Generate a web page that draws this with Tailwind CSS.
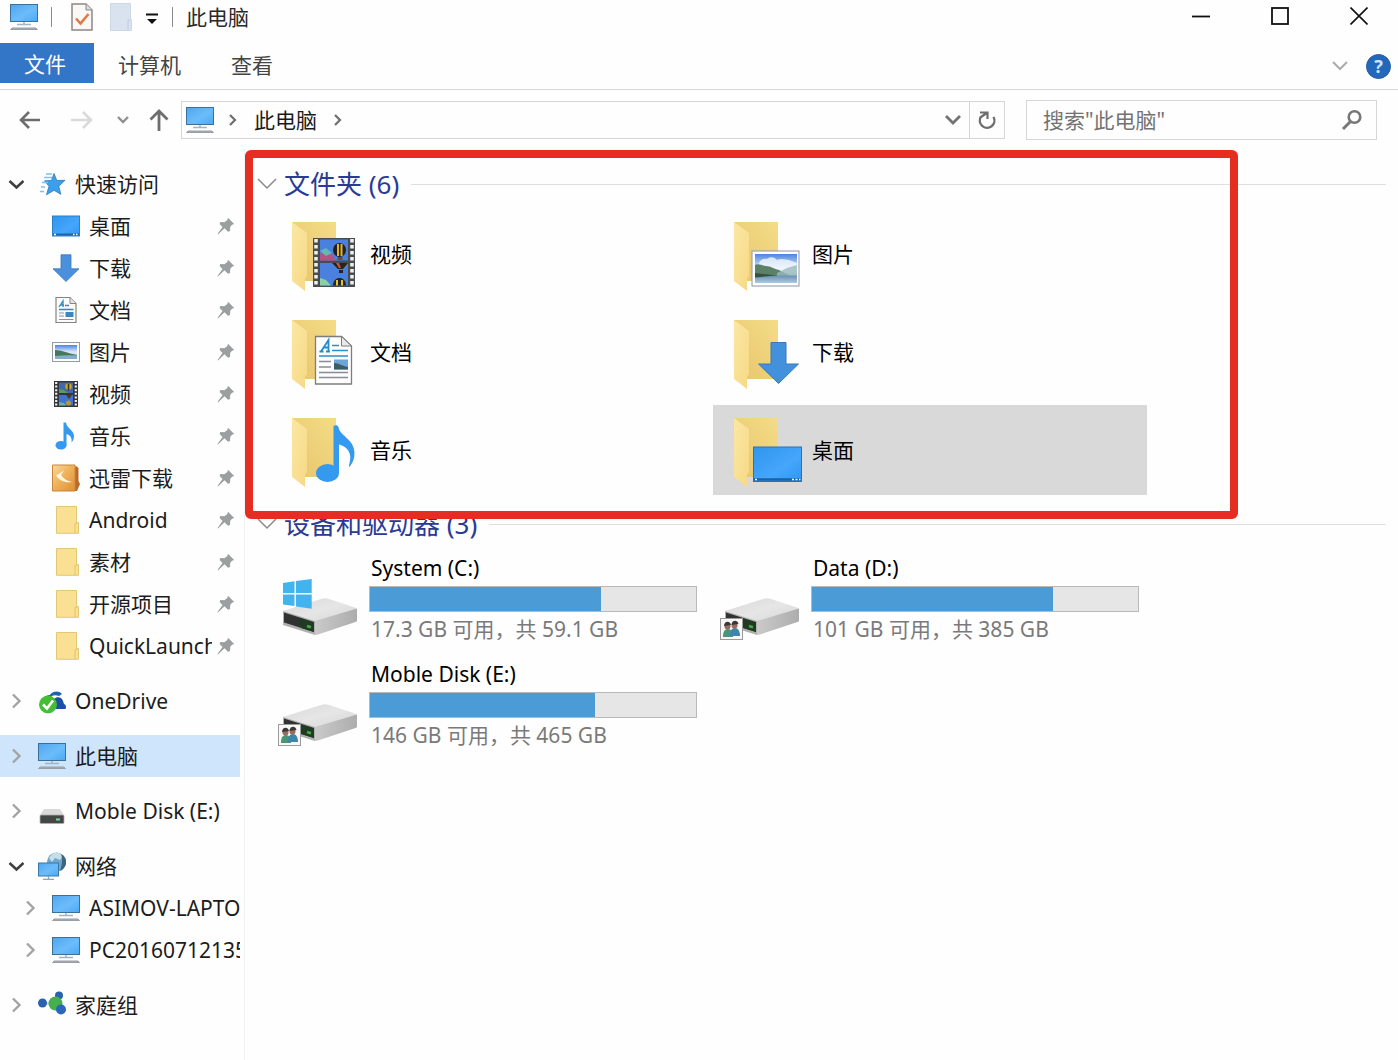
<!DOCTYPE html>
<html lang="zh-CN">
<head>
	<meta charset="UTF-8">
	<meta name="viewport" content="width=device-width, initial-scale=1.0">
	<title>此电脑</title>
	<script src="https://cdn.jsdelivr.net/npm/@tailwindcss/browser@4"></script>
</head>
<body class="min-h-screen flex flex-col overflow-x-hidden bg-[#fefefe] font-['Noto_Sans','Noto_Sans_CJK_SC',sans-serif] text-[21px] leading-[28px] text-[#1a1a1a]">

	<!-- shared icons -->
	<svg class="absolute w-0 h-0" aria-hidden="true">
		<defs>
			<linearGradient id="screen" x1="0" y1="0" x2="1" y2="1">
				<stop offset="0" stop-color="#4fa6ee"/>
				<stop offset=".55" stop-color="#6cbcfa"/>
				<stop offset="1" stop-color="#4ba9f5"/>
			</linearGradient>
			<linearGradient id="desk" x1="0" y1="0" x2="1" y2="1">
				<stop offset="0" stop-color="#2f95ee"/>
				<stop offset=".6" stop-color="#45a6fb"/>
				<stop offset="1" stop-color="#2e96f2"/>
			</linearGradient>
			<linearGradient id="flap" x1="0" y1="0" x2="1" y2="1">
				<stop offset="0" stop-color="#fbe7a4"/>
				<stop offset="1" stop-color="#f6d985"/>
			</linearGradient>
			<linearGradient id="inner" x1="1" y1="0" x2="0" y2="1">
				<stop offset="0" stop-color="#f4dc87"/>
				<stop offset="1" stop-color="#e7c56c"/>
			</linearGradient>
			<linearGradient id="sky" x1="0" y1="0" x2="0" y2="1">
				<stop offset="0" stop-color="#4f83e0"/>
				<stop offset=".5" stop-color="#d9ebf8"/>
				<stop offset="1" stop-color="#9cc3e4"/>
			</linearGradient>
			<linearGradient id="lake" x1="0" y1="0" x2="0" y2="1">
				<stop offset="0" stop-color="#6c8fae"/>
				<stop offset="1" stop-color="#a9cbe8"/>
			</linearGradient>
			<linearGradient id="metal" x1="0" y1="0" x2="1" y2="1">
				<stop offset="0" stop-color="#d8d8d8"/>
				<stop offset=".5" stop-color="#e6e6e6"/>
				<stop offset="1" stop-color="#d6d6d6"/>
			</linearGradient>
			<linearGradient id="side" x1="0" y1="0" x2="1" y2="0">
				<stop offset="0" stop-color="#cacaca"/>
				<stop offset="1" stop-color="#adadad"/>
			</linearGradient>
			<linearGradient id="amber" x1="0" y1="0" x2="1" y2="1">
				<stop offset="0" stop-color="#f8d9a0"/>
				<stop offset=".5" stop-color="#eeb057"/>
				<stop offset="1" stop-color="#e08f33"/>
			</linearGradient>

			<symbol id="pc" viewBox="0 0 28 28">
				<rect x=".5" y="1.5" width="27" height="17" fill="url(#screen)" stroke="#3b7099"/>
				<path d="M14 19v2M7 21.500h14" stroke="#9fb6c6" stroke-width="1.500"/>
				<path d="M2 25l-1.500 1.500h27L26 25z" fill="#a9adb3" stroke="#9a9ea5"/>
			</symbol>
			<symbol id="star" viewBox="0 0 28 28">
				<path d="M16 3.500l2.800 7 8.200-.2-6.200 6 2 8-6.800-4-7.500 4.500 2.500-8.500-4.500-5.500 7-.3z" fill="#3aa0ee" stroke="#2a78b8" stroke-width=".8"/>
				<path d="M8 4h6M6 7.500h8M10 12.500H4M7 17H3M6 21.500H2" stroke="#7fc0f2" stroke-width="1.400"/>
			</symbol>
			<symbol id="desktop" viewBox="0 0 28 28">
				<rect x=".5" y="4" width="27" height="20" fill="url(#desk)" stroke="#2b80c4"/>
				<path d="M1 22.500h26" stroke="#1c66ad" stroke-width="2"/>
				<path d="M2 22.500h2M21 22.500h1.500M24 22.500h1.500" stroke="#fff" stroke-width="1.300"/>
			</symbol>
			<symbol id="down" viewBox="0 0 28 28">
				<path d="M9 .8h10v14h8L14 27.500 1 14.800h8z" fill="#4a90dc" stroke="#3b78b8" stroke-width=".8"/>
			</symbol>
			<symbol id="doc" viewBox="0 0 28 28">
				<path d="M4 1.500h14l6 6v19H4z" fill="#fbfbfb" stroke="#848484" stroke-width="1.200"/>
				<path d="M18 1.500v6h6" fill="#e6e6e6" stroke="#848484"/>
				<path d="M7 11l4-6v6M8.500 9H12" fill="none" stroke="#2d8cc8" stroke-width="1.300"/>
				<path d="M13 9.500h4M7 13.500h14.500" stroke="#2d8cc8" stroke-width="1.500"/>
				<path d="M7 17h5M7 20h5M7 23.500h14.500" stroke="#8f8f9b" stroke-width="1.200"/>
				<rect x="13.500" y="16" width="8" height="5" fill="#3b88c0"/>
			</symbol>
			<symbol id="picture" viewBox="0 0 28 28">
				<rect x=".5" y="4.500" width="27" height="19" fill="#fff" stroke="#969ca3"/>
				<rect x="3" y="7" width="22" height="14" fill="url(#sky)"/>
				<path d="M3 12c6 0 12 3 22 5v4H3z" fill="#47785b"/>
				<path d="M3 18c8-1 15-1 22-.5V21H3z" fill="#86aec9"/>
			</symbol>
			<symbol id="film" viewBox="0 0 28 28">
				<rect x="2" y="1" width="24" height="26" fill="#33373b"/>
				<path d="M4.200 2v24M23.800 2v24" stroke="#f1f1f1" stroke-width="2.200" stroke-dasharray="2 1.600"/>
				<path d="M7 2.500h14v10.500H7z" fill="#4468ad"/>
				<path d="M7 15h14v10.500H7z" fill="#3f73cf"/>
				<circle cx="16.500" cy="6.500" r="3.200" fill="#c8a52b"/>
				<path d="M16.500 3.500v7" stroke="#3b3320" stroke-width="1.500"/>
				<path d="M7 9l5 1 4 3H7z" fill="#5b9b57"/>
				<path d="M14 15h6l-3 4z" fill="#49392b"/>
				<circle cx="16.500" cy="23" r="2.500" fill="#b79a2f"/>
				<path d="M7 22l5 1 2 2.500H7z" fill="#6bb3a4"/>
			</symbol>
			<symbol id="note" viewBox="0 0 28 28">
				<ellipse cx="9" cy="23.300" rx="5.500" ry="4.300" fill="#339af0"/>
				<path d="M11.500 23.500V.5h2.500c.5 6 8 7.500 8 13.500 0 3-1 5-2.500 6.500.8-5-1.500-7.500-5-8.500v11.500z" fill="#339af0"/>
			</symbol>
			<symbol id="thunder" viewBox="0 0 28 28">
				<path d="M24 2l2.500 2v13l1.500 3-3 7H4l-3-1z" fill="#b86a28"/>
				<path d="M.5 1h22.500v26H.5z" fill="url(#amber)" stroke="#c98539"/>
				<path d="M4 11.500l8-5-3 4.500c3 4 6 6 11 7-7 1-12-1-16-6.500z" fill="#fff6e0"/>
			</symbol>
			<symbol id="folder" viewBox="0 0 28 28">
				<path d="M4.500.5h20v16h2v10.800h-22z" fill="#fae092" stroke="#e2c873"/>
				<path d="M23 27V17.500h1.500v-1" fill="none" stroke="#dfc36c"/>
			</symbol>
			<symbol id="onedrive" viewBox="0 0 28 28">
				<path d="M6 12c1-3 3-4 6-4 2-4 9-5 12-1l-3 2c-5-2-9 0-10 4z" fill="#1d63ad"/>
				<path d="M11 22c0-4 1-6 4-7 0-5 8-7 10-1l1 3c3 1 2 5 1 5H12z" fill="#1c4fa5"/>
				<circle cx="10" cy="17.500" r="9" fill="#45bd35"/>
				<path d="M5 17.500l4 4 6-8" fill="none" stroke="#fff" stroke-width="2.600"/>
			</symbol>
			<symbol id="disk" viewBox="0 0 28 28">
				<path d="M6 12h16l4 6H2z" fill="#d9d9d9"/>
				<rect x="2" y="18" width="24" height="8.500" rx="1" fill="#444746" stroke="#aeb0b0" stroke-width=".8"/>
				<path d="M18 22.500h4" stroke="#71d6a2" stroke-width="2"/>
			</symbol>
			<symbol id="network" viewBox="0 0 28 28">
				<circle cx="18.500" cy="10" r="9.500" fill="#6fa6c9"/>
				<path d="M11 6c3-6 10-7 14-2l-3 4-5-2-3 4z" fill="#c3dfe9"/>
				<path d="M23 2c4 2 6 6 5 10-1 3-3 6-6 7 2-6 3-11 1-17z" fill="#3d6480"/>
				<rect x=".5" y="11" width="20" height="13" fill="url(#screen)" stroke="#3878a8"/>
				<path d="M10.500 24v3M5 27.300h11" stroke="#8ba6b8" stroke-width="1.300"/>
			</symbol>
			<symbol id="homegroup" viewBox="0 0 28 28">
				<path d="M5 12.500h12L21 5M17 13l6 6" stroke="#bcd7bd" stroke-width="2" fill="none"/>
				<circle cx="4.500" cy="12" r="4.500" fill="#2a62b0"/>
				<circle cx="21" cy="4.500" r="4" fill="#2a62b0"/>
				<circle cx="17.500" cy="12.500" r="7" fill="#46b050"/>
				<circle cx="23" cy="18.500" r="5" fill="#2b66bb"/>
			</symbol>
			<symbol id="pin" viewBox="0 0 18 18">
				<path d="M11 .8l6.200 6.200-2.200.8-1.800 2.200-.2 4-2 .8-3.500-3.500L1 17.500.5 17l5-7L2.600 7l.8-2 4 .2L10.300 3z" fill="#9b9fa0"/>
			</symbol>
			<symbol id="right" viewBox="0 0 16 16">
				<path d="M5 1.500L11.500 8 5 14.500" fill="none" stroke="#a3a3a3" stroke-width="2.400"/>
			</symbol>
			<symbol id="open" viewBox="0 0 16 16">
				<path d="M1.500 5L8.500 11.500 15.500 5" fill="none" stroke="#3f3f3f" stroke-width="2.600"/>
			</symbol>
			<symbol id="thin" viewBox="0 0 20 12">
				<path d="M1 1l9 9 9-9" fill="none" stroke="#8a8a8a" stroke-width="1.500"/>
			</symbol>
			<symbol id="bigfolder" viewBox="0 0 72 76">
				<path d="M2 6h44v59H14z" fill="url(#inner)"/>
				<path d="M2 6l15 11v43l-2 3v12L2 65z" fill="url(#flap)"/>
			</symbol>
			<symbol id="drive" viewBox="0 0 80 64">
				<path d="M5 35L43 23q4-1.500 8 0L77 31.500q2 .8 1 2.500L38 46z" fill="url(#metal)"/>
				<path d="M37 45l42-12.500v12q0 1-1.500 1.500L40 58.500l-3 .5z" fill="url(#side)"/>
				<path d="M5 35l32 10v14L5 49z" fill="#b0b0b0"/>
				<path d="M6 36.500l30 9.500v10L6 46.500z" fill="#303331"/>
				<path d="M21 42l15 4.500V56l-13-4z" fill="#1f3b22"/>
				<path d="M29 50l4 1.200" stroke="#49a94b" stroke-width="2.500"/>
			</symbol>
			<symbol id="users" viewBox="0 0 80 64">
				<rect x=".5" y="42.500" width="22" height="21" fill="#f8f8f8" stroke="#9b9b9b"/>
				<path d="M3 61c0-6 2-8 5-8s5 3 5 8z" fill="#4a9478"/>
				<path d="M10 60c0-6 2-8 5-8s5 3 5 8z" fill="#3f84ad"/>
				<circle cx="7.500" cy="50.500" r="3" fill="#9b6b5b"/>
				<circle cx="14.500" cy="49.500" r="3" fill="#9b6b5b"/>
				<path d="M4 50c0-5 6-6 7-1zM11.500 49c0-5 6-6 7-1z" fill="#3c3838"/>
			</symbol>
		</defs>
	</svg>

	<!-- title bar -->
	<header class="flex justify-between h-[43px] text-[#2a2a2a]">
		<div class="flex items-center h-[33px] pl-[10px]">
			<svg class="w-7 h-7"><use href="#pc"/></svg>
			<span class="w-px h-5 ml-[13px] bg-[#8c8c8c]"></span>
			<button class="ml-[19px]" aria-label="属性">
				<svg class="w-[22px] h-7" viewBox="0 0 22 28">
					<path d="M1 1h14l6 6v20H1z" fill="#f9f8f7" stroke="#8b8784" stroke-width="1.500"/>
					<path d="M15 1v6h6" fill="#ddd" stroke="#8b8784"/>
					<path d="M5 15.500l4.500 5 8-9.500" fill="none" stroke="#e07a45" stroke-width="2.600"/>
				</svg>
			</button>
			<button class="ml-[17px]" aria-label="新建文件夹">
				<svg class="w-[22px] h-7" viewBox="0 0 22 28">
					<path d="M.5.5h20v16h1v11H.5z" fill="#d9e3ef" stroke="#cdd8e6"/>
					<path d="M18 27V17h2" fill="none" stroke="#bccadb"/>
				</svg>
			</button>
			<button class="ml-[14px] pt-1" aria-label="自定义快速访问工具栏">
				<svg class="w-3 h-3" viewBox="0 0 12 12"><path d="M0 1.500h12" stroke="#111" stroke-width="2"/><path d="M1 6h10l-5 5z" fill="#111"/></svg>
			</button>
			<span class="w-px h-5 ml-[14px] bg-[#8c8c8c]"></span>
			<h1 class="ml-[13px]">此电脑</h1>
		</div>
		<div class="flex h-8">
			<button class="w-[79px] flex items-center justify-center" aria-label="最小化">
				<svg class="w-[18px] h-[18px]" viewBox="0 0 18 18"><path d="M0 9.500h18" stroke="#111" stroke-width="1.800"/></svg>
			</button>
			<button class="w-[79px] flex items-center justify-center" aria-label="最大化">
				<svg class="w-[18px] h-[18px]" viewBox="0 0 18 18"><rect x="1" y="1" width="16" height="16" fill="none" stroke="#111" stroke-width="1.800"/></svg>
			</button>
			<button class="w-[79px] flex items-center justify-center" aria-label="关闭">
				<svg class="w-[18px] h-[18px]" viewBox="0 0 18 18"><path d="M.5.5l17 17M17.500.5l-17 17" stroke="#111" stroke-width="1.600"/></svg>
			</button>
		</div>
	</header>

	<!-- ribbon tabs -->
	<div class="flex justify-between h-[47px] border-b border-[#d6d6d6]">
		<div class="flex h-[40px]">
			<button class="w-[94px] pt-0.5 pr-1 bg-[#3375c6] text-white">文件</button>
			<button class="ml-6 pt-1 text-[#444]">计算机</button>
			<button class="ml-[50px] pt-1 text-[#444]">查看</button>
		</div>
		<div class="flex items-center gap-[18px] pr-[7px]">
			<button aria-label="展开功能区"><svg class="w-4 h-[10px]" viewBox="0 0 16 10"><path d="M1 1l7 7 7-7" fill="none" stroke="#ababab" stroke-width="2"/></svg></button>
			<button class="w-[25px] h-[25px] rounded-full bg-[#2368bb] border border-[#2a5ea0] text-[#cfe4fb] text-[18px] leading-[22px] font-bold" aria-label="帮助">?</button>
		</div>
	</div>

	<!-- address bar -->
	<div class="flex items-center h-[59px] pl-[19px] pr-[21px]">
		<button aria-label="后退"><svg class="w-[22px] h-5" viewBox="0 0 22 20"><path d="M1.500 10H21M10 2l-8 8 8 8" fill="none" stroke="#6e6e6e" stroke-width="2.600"/></svg></button>
		<button class="ml-[30px]" aria-label="前进"><svg class="w-[22px] h-5" viewBox="0 0 22 20"><path d="M0 10h20.500M12 2l8 8-8 8" fill="none" stroke="#dadada" stroke-width="2.600"/></svg></button>
		<button class="ml-6" aria-label="最近浏览的位置"><svg class="w-3 h-2" viewBox="0 0 12 8"><path d="M1 1l5 5 5-5" fill="none" stroke="#909090" stroke-width="2.400"/></svg></button>
		<button class="ml-5" aria-label="上移"><svg class="w-5 h-[22px]" viewBox="0 0 20 22"><path d="M10 22V2M1.500 10.500L10 2l8.500 8.500" fill="none" stroke="#6e6e6e" stroke-width="2.800"/></svg></button>
		<div class="flex flex-1 items-center h-[38px] ml-3 border border-[#d6d6d6]">
			<svg class="w-7 h-7 ml-1"><use href="#pc"/></svg>
			<svg class="w-2 h-3 ml-[15px]" viewBox="0 0 8 12"><path d="M1 1l5 5-5 5" fill="none" stroke="#6e6e6e" stroke-width="2.200"/></svg>
			<button class="ml-[17px]">此电脑</button>
			<svg class="w-2 h-3 ml-[17px]" viewBox="0 0 8 12"><path d="M1 1l5 5-5 5" fill="none" stroke="#6e6e6e" stroke-width="2.200"/></svg>
			<button class="ml-auto mr-2" aria-label="以前的位置"><svg class="w-4 h-[10px]" viewBox="0 0 16 10"><path d="M1 1l7 7 7-7" fill="none" stroke="#737373" stroke-width="2.800"/></svg></button>
			<button class="flex items-center justify-center w-[35px] h-full border-l border-[#d6d6d6]" aria-label="刷新">
				<svg class="w-5 h-5" viewBox="0 0 20 20"><path d="M16.500 7a7.300 7.300 0 1 1-12.500-.5" fill="none" stroke="#6e6e6e" stroke-width="2.400"/><path d="M3 2.500h7.500V9M10.500 2.500L4 7" fill="none" stroke="#6e6e6e" stroke-width="2.200"/></svg>
			</button>
		</div>
		<label class="flex items-center w-[351px] h-10 ml-[21px] pl-4 pr-[13px] border border-[#d6d6d6]">
			<input type="text" aria-label="搜索" placeholder="搜索&quot;此电脑&quot;" class="flex-1 min-w-0 bg-transparent outline-none placeholder:text-[#737373]">
			<svg class="w-[22px] h-[22px]" viewBox="0 0 22 22"><circle cx="13.500" cy="8" r="5.800" fill="none" stroke="#777" stroke-width="2.600"/><path d="M9.500 12.500L2 20" stroke="#777" stroke-width="3"/></svg>
		</label>
	</div>

	<div class="flex flex-1">
		<!-- navigation pane -->
		<nav class="w-[245px] shrink-0 pt-[14px] border-r border-[#f1f1f1] text-[#1c1c1c]">
			<ul class="flex flex-col gap-[13px] w-[240px] whitespace-nowrap">
				<li>
					<a href="#" class="flex items-center h-[42px] pl-2"><svg class="w-4 h-4"><use href="#open"/></svg><svg class="w-7 h-7 ml-[14px] mr-[9px]"><use href="#star"/></svg>快速访问</a>
					<ul>
						<li><a href="#" class="flex items-center h-[42px] pl-[52px] pr-[5px]"><svg class="w-7 h-7 mr-[9px] shrink-0"><use href="#desktop"/></svg><span class="flex-1 overflow-hidden">桌面</span><svg class="w-[18px] h-[18px] ml-[5px] shrink-0"><use href="#pin"/></svg></a></li>
						<li><a href="#" class="flex items-center h-[42px] pl-[52px] pr-[5px]"><svg class="w-7 h-7 mr-[9px] shrink-0"><use href="#down"/></svg><span class="flex-1 overflow-hidden">下载</span><svg class="w-[18px] h-[18px] ml-[5px] shrink-0"><use href="#pin"/></svg></a></li>
						<li><a href="#" class="flex items-center h-[42px] pl-[52px] pr-[5px]"><svg class="w-7 h-7 mr-[9px] shrink-0"><use href="#doc"/></svg><span class="flex-1 overflow-hidden">文档</span><svg class="w-[18px] h-[18px] ml-[5px] shrink-0"><use href="#pin"/></svg></a></li>
						<li><a href="#" class="flex items-center h-[42px] pl-[52px] pr-[5px]"><svg class="w-7 h-7 mr-[9px] shrink-0"><use href="#picture"/></svg><span class="flex-1 overflow-hidden">图片</span><svg class="w-[18px] h-[18px] ml-[5px] shrink-0"><use href="#pin"/></svg></a></li>
						<li><a href="#" class="flex items-center h-[42px] pl-[52px] pr-[5px]"><svg class="w-7 h-7 mr-[9px] shrink-0"><use href="#film"/></svg><span class="flex-1 overflow-hidden">视频</span><svg class="w-[18px] h-[18px] ml-[5px] shrink-0"><use href="#pin"/></svg></a></li>
						<li><a href="#" class="flex items-center h-[42px] pl-[52px] pr-[5px]"><svg class="w-7 h-7 mr-[9px] shrink-0"><use href="#note"/></svg><span class="flex-1 overflow-hidden">音乐</span><svg class="w-[18px] h-[18px] ml-[5px] shrink-0"><use href="#pin"/></svg></a></li>
						<li><a href="#" class="flex items-center h-[42px] pl-[52px] pr-[5px]"><svg class="w-7 h-7 mr-[9px] shrink-0"><use href="#thunder"/></svg><span class="flex-1 overflow-hidden">迅雷下载</span><svg class="w-[18px] h-[18px] ml-[5px] shrink-0"><use href="#pin"/></svg></a></li>
						<li><a href="#" class="flex items-center h-[42px] pl-[52px] pr-[5px]"><svg class="w-7 h-7 mr-[9px] shrink-0"><use href="#folder"/></svg><span class="flex-1 overflow-hidden">Android</span><svg class="w-[18px] h-[18px] ml-[5px] shrink-0"><use href="#pin"/></svg></a></li>
						<li><a href="#" class="flex items-center h-[42px] pl-[52px] pr-[5px]"><svg class="w-7 h-7 mr-[9px] shrink-0"><use href="#folder"/></svg><span class="flex-1 overflow-hidden">素材</span><svg class="w-[18px] h-[18px] ml-[5px] shrink-0"><use href="#pin"/></svg></a></li>
						<li><a href="#" class="flex items-center h-[42px] pl-[52px] pr-[5px]"><svg class="w-7 h-7 mr-[9px] shrink-0"><use href="#folder"/></svg><span class="flex-1 overflow-hidden">开源项目</span><svg class="w-[18px] h-[18px] ml-[5px] shrink-0"><use href="#pin"/></svg></a></li>
						<li><a href="#" class="flex items-center h-[42px] pl-[52px] pr-[5px]"><svg class="w-7 h-7 mr-[9px] shrink-0"><use href="#folder"/></svg><span class="flex-1 overflow-hidden">QuickLaunch</span><svg class="w-[18px] h-[18px] ml-[5px] shrink-0"><use href="#pin"/></svg></a></li>
					</ul>
				</li>
				<li><a href="#" class="flex items-center h-[42px] pl-2"><svg class="w-4 h-4"><use href="#right"/></svg><svg class="w-7 h-7 ml-[14px] mr-[9px]"><use href="#onedrive"/></svg>OneDrive</a></li>
				<li><a href="#" class="flex items-center h-[42px] pl-2 bg-[#cfe5fc]"><svg class="w-4 h-4"><use href="#right"/></svg><svg class="w-7 h-7 ml-[14px] mr-[9px]"><use href="#pc"/></svg>此电脑</a></li>
				<li><a href="#" class="flex items-center h-[42px] pl-2"><svg class="w-4 h-4"><use href="#right"/></svg><svg class="w-7 h-7 ml-[14px] mr-[9px]"><use href="#disk"/></svg>Moble Disk (E:)</a></li>
				<li>
					<a href="#" class="flex items-center h-[42px] pl-2"><svg class="w-4 h-4"><use href="#open"/></svg><svg class="w-7 h-7 ml-[14px] mr-[9px]"><use href="#network"/></svg>网络</a>
					<ul>
						<li><a href="#" class="flex items-center h-[42px] pl-[22px]"><svg class="w-4 h-4 shrink-0"><use href="#right"/></svg><svg class="w-7 h-7 ml-[14px] mr-[9px] shrink-0"><use href="#pc"/></svg><span class="flex-1 overflow-hidden">ASIMOV-LAPTO</span></a></li>
						<li><a href="#" class="flex items-center h-[42px] pl-[22px]"><svg class="w-4 h-4 shrink-0"><use href="#right"/></svg><svg class="w-7 h-7 ml-[14px] mr-[9px] shrink-0"><use href="#pc"/></svg><span class="flex-1 overflow-hidden">PC20160712135</span></a></li>
					</ul>
				</li>
				<li><a href="#" class="flex items-center h-[42px] pl-2"><svg class="w-4 h-4"><use href="#right"/></svg><svg class="w-7 h-7 ml-[14px] mr-[9px]"><use href="#homegroup"/></svg>家庭组</a></li>
			</ul>
		</nav>

		<main class="relative flex-1 min-w-0 mt-px pt-[14px] pl-3 pr-3 text-black">
			<!-- highlight frame over the folder group -->
			<div class="absolute top-0 left-0 w-[993px] h-[369px] border-8 border-[#e52d22] rounded-md pointer-events-none"></div>

			<section>
				<h2 class="flex items-center h-10 text-[26px] leading-[40px] text-[#2b3a94]">
					<svg class="w-5 h-3 mr-[7px]"><use href="#thin"/></svg>文件夹 (6)
					<span class="flex-1 h-px ml-3 bg-[#dfdfdf]"></span>
				</h2>
				<div class="grid grid-cols-[repeat(auto-fill,434px)] gap-x-2 gap-y-2 pt-[5px] pl-[14px]">
					<a href="#" class="flex items-center h-[90px] pl-[19px]">
						<svg class="w-[72px] h-[76px] mr-2" viewBox="0 0 72 76">
							<use href="#bigfolder"/>
							<rect x="23" y="22" width="42" height="49" fill="#4a4d50"/>
							<path d="M26 23v47M62 23v47" stroke="#f0f0f0" stroke-width="3.500" stroke-dasharray="3.500 2.500"/>
							<path d="M30 23.500h28v21H30zM30 47h28v22.500H30z" fill="#4a80de"/>
							<path d="M30 38c5-4 9-3 12 0l4 6.500H30z" fill="#b45486"/>
							<path d="M30 35l6-3 6 5-6 3z" fill="#62b9b2"/>
							<ellipse cx="49.500" cy="34" rx="6.500" ry="7" fill="#23201c"/>
							<path d="M47 28h2v12h-2zM50.500 28h2v12h-2z" fill="#e2b52c"/>
							<path d="M47.500 41h5v3h-5z" fill="#7b4a21"/>
							<path d="M42 47h16l-5 6h-5z" fill="#2c211f"/>
							<path d="M46 47h3l2 5h-2z" fill="#d4503a"/>
							<path d="M49 54h4v3h-4z" fill="#2c211f"/>
							<path d="M43 69.500c0-10 13-10 13 0z" fill="#2a251e"/>
							<path d="M46 64h2v5.500h-2zM51 64h2v5.500h-2z" fill="#e0c52d"/>
							<path d="M30 62l6 2 5 5.500H30z" fill="#8bd0a4"/>
						</svg>视频
					</a>
					<a href="#" class="flex items-center h-[90px] pl-[19px]">
						<svg class="w-[72px] h-[76px] mr-2" viewBox="0 0 72 76">
							<use href="#bigfolder"/>
							<rect x="20" y="35" width="47" height="35" fill="#fff" stroke="#8e959c"/>
							<rect x="23" y="38" width="42" height="29" fill="url(#sky)"/>
							<path d="M27 47c2-4 5-5 8-4 3-3 8-2 10 1 5-2 9 0 12 0l8 3v10H23z" fill="#f2f8fc" opacity=".8"/>
							<path d="M23 49c4-2 8 1 11 1 5 0 8 3 13 4l10 5v1H23z" fill="#5d8168"/>
							<path d="M45 57l10-5 10-3v11H45z" fill="#9ab9bd" opacity=".8"/>
							<path d="M23 59.500h42V67H23z" fill="url(#lake)"/>
							<path d="M23 57l22 2.500-22 2z" fill="#35523f"/>
						</svg>图片
					</a>
					<a href="#" class="flex items-center h-[90px] pl-[19px]">
						<svg class="w-[72px] h-[76px] mr-2" viewBox="0 0 72 76">
							<use href="#bigfolder"/>
							<path d="M25.500 22.500h26l10 9.500v38h-36z" fill="#fdfdfd" stroke="#7d7d7d" stroke-width="1.300"/>
							<path d="M51.500 22.500V32h10z" fill="#e9e9e9" stroke="#7d7d7d"/>
							<path d="M29.500 37.500h4M36 37.500h4M31 37.500l7.500-11.500v11.500M34 33.500h5" fill="none" stroke="#258cc9" stroke-width="1.800"/>
							<path d="M42 31.500h7M42 36.500h16M29 42h29" stroke="#2c8fc6" stroke-width="1.600"/>
							<path d="M29 47.500h12M29 53h12M29 58.500h29M29 63.500h29" stroke="#8d8b97" stroke-width="1.400"/>
							<path d="M44 45.500h14v10H44z" fill="#6aa6da"/>
							<path d="M44 49c5 0 8 3 14 4v2.500H44z" fill="#3d5c63"/>
						</svg>文档
					</a>
					<a href="#" class="flex items-center h-[90px] pl-[19px]">
						<svg class="w-[72px] h-[76px] mr-2" viewBox="0 0 72 76">
							<use href="#bigfolder"/>
							<path d="M39 28.500h15V50h12.500L46.500 69.500 26.500 50H39z" fill="#4391dc" stroke="#3a79b5"/>
						</svg>下载
					</a>
					<a href="#" class="flex items-center h-[90px] pl-[19px]">
						<svg class="w-[72px] h-[76px] mr-2" viewBox="0 0 72 76">
							<use href="#bigfolder"/>
							<ellipse cx="37.500" cy="61" rx="11.500" ry="9" fill="#339af0"/>
							<path d="M43.500 60V14c2-1.500 4-1 5 1 1 9 16 12 16 26 0 6-2 10-5 14-2-1 3-8-.5-15-2-4-5-6-10-7.500V61z" fill="#339af0"/>
						</svg>音乐
					</a>
					<a href="#" class="flex items-center h-[90px] pl-[19px] bg-[#d9d9d9]">
						<svg class="w-[72px] h-[76px] mr-2" viewBox="0 0 72 76">
							<use href="#bigfolder"/>
							<rect x="21.500" y="35" width="48" height="34.500" fill="url(#desk)" stroke="#2474b5"/>
							<path d="M22 67.500h47" stroke="#1a62a6" stroke-width="2.500"/>
							<path d="M23 67.500h2M60 67.500h2M63.500 67.500h2M67 67.500h1.500" stroke="#fff" stroke-width="1.500"/>
						</svg>桌面
					</a>
				</div>
			</section>

			<section class="pt-[9px]">
				<h2 class="flex items-center h-10 text-[26px] leading-[40px] text-[#2b3a94]">
					<svg class="w-5 h-3 mr-[7px]"><use href="#thin"/></svg>设备和驱动器 (3)
					<span class="flex-1 h-px ml-3 bg-[#dfdfdf]"></span>
				</h2>
				<div class="grid grid-cols-[repeat(auto-fill,434px)] gap-x-2 gap-y-2 pt-[6px] pl-[14px]">
					<a href="#" class="flex h-[98px] pl-[7px] pt-1">
						<svg class="w-20 h-16 mt-[22px] mr-[11px]" viewBox="0 0 80 64">
							<use href="#drive"/>
							<path d="M5 7l11.500-1.700V17H5zM18 5l15.700-2v14H18zM5 18.500h11.500V30L5 28.500zM18 18.500h15.700v14.300L18 30.500z" fill="#41b4ee"/>
						</svg>
						<div class="w-[328px]">
							<p class="pl-0.5">System (C:)</p>
							<div class="h-[26px] mt-1 mb-[3px] border border-[#b9b9b9] bg-[#e6e6e6]"><div class="h-full bg-[#4a9bd6]" style="width: 71%"></div></div>
							<p class="pl-0.5 text-[#7a7a7a]">17.3 GB 可用，共 59.1 GB</p>
						</div>
					</a>
					<a href="#" class="flex h-[98px] pl-[7px] pt-1">
						<svg class="w-20 h-16 mt-[22px] mr-[11px]" viewBox="0 0 80 64"><use href="#drive"/><use href="#users"/></svg>
						<div class="w-[328px]">
							<p class="pl-0.5">Data (D:)</p>
							<div class="h-[26px] mt-1 mb-[3px] border border-[#b9b9b9] bg-[#e6e6e6]"><div class="h-full bg-[#4a9bd6]" style="width: 74%"></div></div>
							<p class="pl-0.5 text-[#7a7a7a]">101 GB 可用，共 385 GB</p>
						</div>
					</a>
					<a href="#" class="flex h-[98px] pl-[7px] pt-1">
						<svg class="w-20 h-16 mt-[22px] mr-[11px]" viewBox="0 0 80 64"><use href="#drive"/><use href="#users"/></svg>
						<div class="w-[328px]">
							<p class="pl-0.5">Moble Disk (E:)</p>
							<div class="h-[26px] mt-1 mb-[3px] border border-[#b9b9b9] bg-[#e6e6e6]"><div class="h-full bg-[#4a9bd6]" style="width: 69%"></div></div>
							<p class="pl-0.5 text-[#7a7a7a]">146 GB 可用，共 465 GB</p>
						</div>
					</a>
				</div>
			</section>
		</main>
	</div>
</body>
</html>
